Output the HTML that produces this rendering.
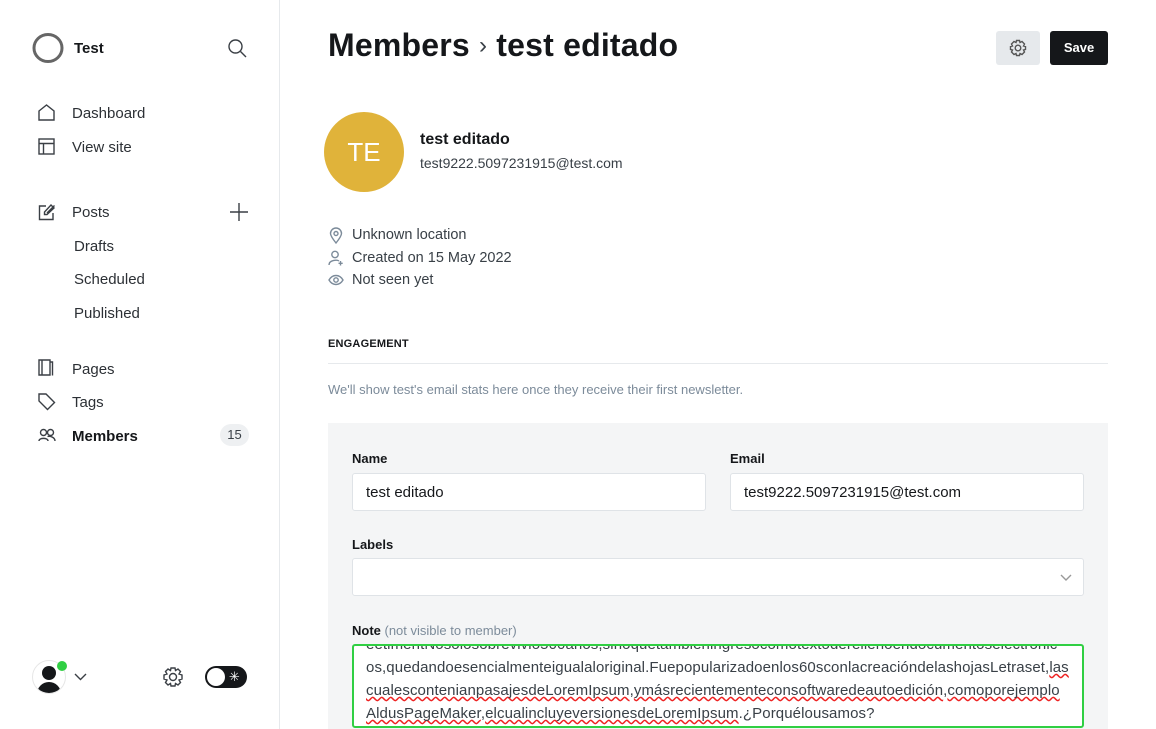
<!DOCTYPE html>
<html><head><meta charset="utf-8">
<style>
*{box-sizing:border-box;margin:0;padding:0}
body{width:1156px;height:729px;overflow:hidden;background:#fff;font-family:"Liberation Sans","DejaVu Sans",sans-serif;color:#15171a;position:relative}
.side{position:absolute;left:0;top:0;width:280px;height:729px;border-right:1px solid #e6e9ec}
.abs{position:absolute}
.nav{position:absolute;left:72px;font-size:15px;color:#2c3035}
.sub{position:absolute;left:74px;font-size:15px;color:#2c3035}
.ic{position:absolute;stroke:#3a3f45;fill:none;stroke-width:1.4}
.meta{position:absolute;left:352px;font-size:14.5px;color:#394047}
.box{position:absolute;border:1px solid #dfe3e7;background:#fff;border-radius:3px;font-size:15px;color:#15171a;padding-left:13px;display:flex;align-items:center}
.lbl{position:absolute;font-size:13px;font-weight:bold}
.w{text-decoration:underline wavy #e22;text-decoration-skip-ink:none}
</style></head><body>
<div class="side">
  <svg class="abs" style="left:31px;top:32px" width="34" height="32"><ellipse cx="17" cy="16" rx="14" ry="13.5" fill="none" stroke="#666" stroke-width="3"/></svg>
  <div class="abs" style="left:74px;top:40px;font-size:15px;font-weight:bold">Test</div>
  <svg class="ic" style="left:227px;top:38px" width="20" height="20"><circle cx="8.5" cy="8.5" r="6.5"/><path d="M13.5 13.5L19 19"/></svg>

  <svg class="ic" style="left:38px;top:104px" width="18" height="17"><path d="M1 7L8.5 1L16 7V16H1Z"/></svg>
  <div class="nav" style="top:105px">Dashboard</div>
  <svg class="ic" style="left:38px;top:138px" width="18" height="17"><rect x="1" y="1" width="15" height="15"/><path d="M1 5.5H16M5.5 5.5V16"/></svg>
  <div class="nav" style="top:139px">View site</div>

  <svg class="ic" style="left:38px;top:203px" width="18" height="18"><path d="M8 3H1.5V16.5H15V10M9 10L16.5 2.5M13 2L16 5L9 11.5H6.5V9Z"/></svg>
  <div class="nav" style="top:204px">Posts</div>
  <svg class="ic" style="left:229px;top:202px" width="20" height="20"><path d="M10 1V19M1 10H19"/></svg>
  <div class="sub" style="top:238px">Drafts</div>
  <div class="sub" style="top:271px">Scheduled</div>
  <div class="sub" style="top:305px">Published</div>

  <svg class="ic" style="left:38px;top:359px" width="16" height="18"><path d="M1 1H12V16H1ZM4 1V16M12 3H14.5V16.5"/></svg>
  <div class="nav" style="top:361px">Pages</div>
  <svg class="ic" style="left:38px;top:393px" width="18" height="18"><path d="M1 1H8L16.5 9.5L9.5 16.5L1 8Z"/></svg>
  <div class="nav" style="top:394px">Tags</div>
  <svg class="ic" style="left:38px;top:428px" width="18" height="15"><circle cx="5.5" cy="4.5" r="3"/><circle cx="12.5" cy="4.5" r="3"/><path d="M1 13C1 9.5 10 9.5 10 13M9.5 8.5C12 8 17 9 17 13"/></svg>
  <div class="nav" style="top:428px;font-weight:bold;color:#15171a">Members</div>
  <div class="abs" style="left:220px;top:424px;width:29px;height:22px;border-radius:11px;background:#eef0f2;font-size:13px;color:#394047;text-align:center;line-height:22px">15</div>

  <div class="abs" style="left:32px;top:660px;width:34px;height:34px;border-radius:50%;border:1px solid #e6e6e6;overflow:hidden;background:#fff">
    <div class="abs" style="left:9px;top:5px;width:14px;height:14px;border-radius:50%;background:#15171a"></div>
    <div class="abs" style="left:4px;top:21px;width:24px;height:16px;border-radius:12px 12px 0 0;background:#15171a"></div>
  </div>
  <div class="abs" style="left:57px;top:661px;width:10px;height:10px;border-radius:50%;background:#30cf43"></div>
  <svg class="ic" style="left:74px;top:673px" width="13" height="8"><path d="M1 1L6.5 6.5L12 1"/></svg>
  <svg class="ic" style="left:162px;top:666px" width="22" height="22"><circle cx="11" cy="11" r="3.5"/><path d="M9 2H13L13.5 4.5L16 3L18.5 5.5L17 8L20 9V13L17 14L18.5 16.5L16 19L13.5 17.5L13 20H9L8.5 17.5L6 19L3.5 16.5L5 14L2 13V9L5 8L3.5 5.5L6 3L8.5 4.5Z"/></svg>
  <div class="abs" style="left:205px;top:666px;width:42px;height:22px;border-radius:11px;background:#15171a">
    <div class="abs" style="left:2px;top:2px;width:18px;height:18px;border-radius:50%;background:#fff"></div>
    <div class="abs" style="left:24px;top:2px;color:#fff;font-size:13px;line-height:18px">✳</div>
  </div>
</div>

<div class="abs" style="left:328px;top:27px;font-size:32px;font-weight:bold;letter-spacing:0.2px;white-space:nowrap">Members <span style="font-weight:normal;font-size:24px;position:relative;top:-3px;color:#394047">›</span> test editado</div>
<div class="abs" style="left:996px;top:31px;width:44px;height:34px;border-radius:3px;background:#e6e9ec"></div>
<svg class="ic" style="left:1009px;top:39px;stroke:#555" width="18" height="18"><circle cx="9" cy="9" r="2.8"/><path d="M7.5 1.5H10.5L11 3.5L13 2.5L15.5 5L14.5 7L16.5 7.5V10.5L14.5 11L15.5 13L13 15.5L11 14.5L10.5 16.5H7.5L7 14.5L5 15.5L2.5 13L3.5 11L1.5 10.5V7.5L3.5 7L2.5 5L5 2.5L7 3.5Z"/></svg>
<div class="abs" style="left:1050px;top:31px;width:58px;height:34px;border-radius:3px;background:#15171a;color:#fff;font-size:13px;font-weight:bold;text-align:center;line-height:34px">Save</div>

<div class="abs" style="left:324px;top:112px;width:80px;height:80px;border-radius:50%;background:#e0b33a;color:#fff;font-size:26px;text-align:center;line-height:80px">TE</div>
<div class="abs" style="left:420px;top:131px;font-size:16px;font-weight:bold">test editado</div>
<div class="abs" style="left:420px;top:155px;font-size:14px;color:#394047">test9222.5097231915@test.com</div>

<svg class="ic" style="left:329px;top:227px;stroke:#7c8b9a" width="14" height="17"><path d="M7 16C3 11 1.5 8.5 1.5 6.5A5.5 5.5 0 0 1 12.5 6.5C12.5 8.5 11 11 7 16Z"/><circle cx="7" cy="6.5" r="2"/></svg>
<div class="meta" style="top:227px">Unknown location</div>
<svg class="ic" style="left:328px;top:250px;stroke:#7c8b9a" width="16" height="16"><circle cx="7" cy="4.5" r="3.2"/><path d="M1 15C1 10 9 9.5 11 11M12.5 11V15.5M10.5 13.3H14.7"/></svg>
<div class="meta" style="top:250px">Created on 15 May 2022</div>
<svg class="ic" style="left:328px;top:274px;stroke:#7c8b9a" width="16" height="12"><path d="M1 6C4.5 0 11.5 0 15 6C11.5 12 4.5 12 1 6Z"/><circle cx="8" cy="6" r="2.2"/></svg>
<div class="meta" style="top:272px">Not seen yet</div>

<div class="abs" style="left:328px;top:338px;font-size:11px;font-weight:bold;letter-spacing:0.2px">ENGAGEMENT</div>
<div class="abs" style="left:328px;top:363px;width:780px;height:1px;background:#e6e9ec"></div>
<div class="abs" style="left:328px;top:382px;font-size:13px;color:#7c8b9a">We'll show test's email stats here once they receive their first newsletter.</div>

<div class="abs" style="left:328px;top:423px;width:780px;height:306px;background:#f4f5f6"></div>
<div class="lbl" style="left:352px;top:451px">Name</div>
<div class="lbl" style="left:730px;top:451px">Email</div>
<div class="box" style="left:352px;top:473px;width:354px;height:38px">test editado</div>
<div class="box" style="left:730px;top:473px;width:354px;height:38px">test9222.5097231915@test.com</div>
<div class="lbl" style="left:352px;top:537px">Labels</div>
<div class="box" style="left:352px;top:558px;width:732px;height:38px"></div>
<svg class="ic" style="left:1060px;top:574px;stroke:#999" width="12" height="7"><path d="M1 1L6 6L11 1"/></svg>
<div class="lbl" style="left:352px;top:623px">Note <span style="font-weight:normal;color:#7c8b9a">(not visible to member)</span></div>
<div class="abs" style="left:352px;top:644px;width:732px;height:84px;border:2px solid #30cf43;border-radius:3px;background:#fff;overflow:hidden">
  <div class="abs" style="left:12px;top:-13px;width:710px;font-size:15px;line-height:23px;color:#394047;white-space:nowrap;letter-spacing:0.1px">
    <div>eetimentNosolosobrevivio500años,sinoquetambieningresocomotextoderellenoendocumentoselectrónic</div>
    <div>os,quedandoesencialmenteigualaloriginal.Fuepopularizadoenlos60sconlacreacióndelashojasLetraset,<span class="w">las</span></div>
    <div><span class="w">cualescontenianpasajesdeLoremIpsum</span>,<span class="w">ymásrecientementeconsoftwaredeautoedición</span>,<span class="w">comoporejemplo</span></div>
    <div><span class="w">AldusPageMaker</span>,<span class="w">elcualincluyeversionesdeLoremIpsum</span>.¿Porquélousamos?</div>
  </div>
</div>
</body></html>
